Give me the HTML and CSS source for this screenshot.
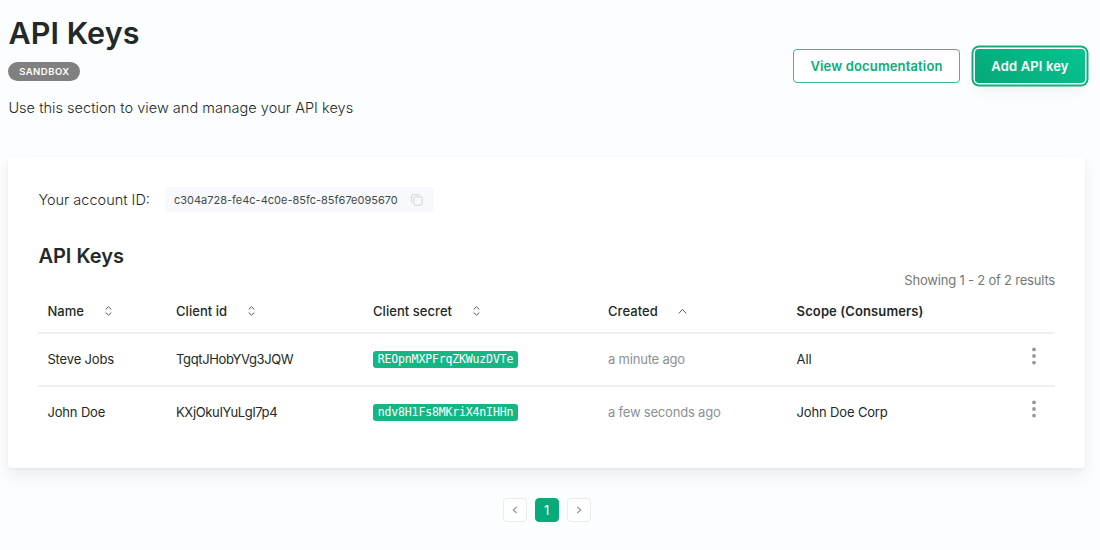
FILE: index.html
```html
<!DOCTYPE html>
<html lang="en">
<head>
    <meta charset="utf-8">
    <title>API Keys</title>

    <link rel="stylesheet" href="styles.css">
</head>
<body>

    <header class="header">
        <div class="header__info">
            <h1 class="header__title">API Keys</h1>
            <span class="header__badge">SANDBOX</span>
            <p class="header__text">Use this section to view and manage your API keys</p>
        </div>
        <div class="header__actions">
            <button class="button button--outline">View documentation</button>
            <button class="button button--primary">Add API key</button>
        </div>
    </header>

    <main class="card">
        <div class="account">
            <span class="account__label">Your account ID:</span>
            <div class="account__box">
                <span class="account__id">c304a728-fe4c-4c0e-85fc-85f67e095670</span>
                <svg class="account__copy" width="12" height="12" viewBox="0 0 12 12">
                    <rect x="2.9" y="2.9" width="8.3" height="8.3" rx="1.5"/>
                    <path d="M1.5 8.7Q.7 8.5.7 7.5V2.2Q.7.7 2.2.7h5.3q1 0 1.2.8"/>
                </svg>
            </div>
        </div>

        <h2 class="card__title">API Keys</h2>
        <p class="card__results">Showing 1 - 2 of 2 results</p>

        <table class="keys">
            <colgroup>
                <col class="keys__col-name">
                <col class="keys__col-id">
                <col class="keys__col-secret">
                <col class="keys__col-created">
                <col class="keys__col-scope">
                <col class="keys__col-menu">
            </colgroup>
            <thead>
                <tr>
                    <th>
                        <div class="keys__sort">Name
                            <svg class="icon-sort" width="7" height="10" viewBox="0 0 7 10"><path d="M.7 3.4 3.5.8l2.8 2.6M.7 6.6l2.8 2.6 2.8-2.6"/></svg>
                        </div>
                    </th>
                    <th>
                        <div class="keys__sort">Client id
                            <svg class="icon-sort" width="7" height="10" viewBox="0 0 7 10"><path d="M.7 3.4 3.5.8l2.8 2.6M.7 6.6l2.8 2.6 2.8-2.6"/></svg>
                        </div>
                    </th>
                    <th>
                        <div class="keys__sort">Client secret
                            <svg class="icon-sort" width="7" height="10" viewBox="0 0 7 10"><path d="M.7 3.4 3.5.8l2.8 2.6M.7 6.6l2.8 2.6 2.8-2.6"/></svg>
                        </div>
                    </th>
                    <th>
                        <div class="keys__sort keys__sort--active">Created
                            <svg class="icon-sort" width="9" height="10" viewBox="0 0 9 10"><path d="M.8 7.4l3.7-4 3.7 4"/></svg>
                        </div>
                    </th>
                    <th class="keys__scope">Scope (Consumers)</th>
                    <th></th>
                </tr>
            </thead>
            <tbody>
                <tr>
                    <td>Steve Jobs</td>
                    <td class="keys__id">TgqtJHobYVg3JQW</td>
                    <td class="keys__code"><code class="keys__secret">REOpnMXPFrqZKWuzDVTe</code></td>
                    <td class="keys__date">a minute ago</td>
                    <td>All</td>
                    <td class="keys__menu"><svg width="4" height="18" viewBox="0 0 4 18"><circle cx="2" cy="2.4" r="1.9"/><circle cx="2" cy="9" r="1.9"/><circle cx="2" cy="15.6" r="1.9"/></svg></td>
                </tr>
                <tr>
                    <td>John Doe</td>
                    <td class="keys__id">KXjOkuIYuLgl7p4</td>
                    <td class="keys__code"><code class="keys__secret">ndv8H1Fs8MKriX4nIHHn</code></td>
                    <td class="keys__date">a few seconds ago</td>
                    <td>John Doe Corp</td>
                    <td class="keys__menu"><svg width="4" height="18" viewBox="0 0 4 18"><circle cx="2" cy="2.4" r="1.9"/><circle cx="2" cy="9" r="1.9"/><circle cx="2" cy="15.6" r="1.9"/></svg></td>
                </tr>
            </tbody>
        </table>
    </main>

    <nav class="pagination">
        <a class="pagination__item"><svg width="6" height="8" viewBox="0 0 6 8"><path d="M4.7 1 1.3 4l3.4 3"/></svg></a>
        <a class="pagination__item pagination__item--active">1</a>
        <a class="pagination__item"><svg width="6" height="8" viewBox="0 0 6 8"><path d="M1.3 1l3.4 3-3.4 3"/></svg></a>
    </nav>

</body>
</html>
```
FILE: styles.css
```css
* {
    box-sizing: border-box;
}

body {
    background-color: #fcfdff;
    color: #222927;
    margin: 0;
    padding: 12px 15px 0 8.4px;
    font-family: Inter, "Open Sans", sans-serif;
    font-size: 13px;
    height: 550px;
    overflow: hidden;
}

h1, h2, p {
    margin: 0;
}

.header {
    display: flex;
    justify-content: space-between;
    height: 145px;
}

.header__title {
    font-size: 30.5px;
    font-weight: 600;
    line-height: 42px;
    letter-spacing: 0.1px;
}

.header__badge {
    display: block;
    width: 72px;
    height: 19px;
    margin-top: 8px;
    border-radius: 10px;
    background-color: #808080;
    color: #fff;
    font-size: 9.5px;
    font-weight: 600;
    line-height: 19px;
    letter-spacing: 0.5px;
    text-align: center;
}

.header__text {
    margin-top: 16px;
    font-size: 14.5px;
    font-weight: 300;
    line-height: 22px;
    letter-spacing: 0.03px;
    white-space: nowrap;
}

.header__actions {
    display: flex;
    gap: 15px;
    padding-top: 37px;
}

.button {
    height: 34px;
    border-radius: 4px;
    font-family: inherit;
    font-size: 13px;
    font-weight: 600;
    letter-spacing: 0.15px;
    padding: 0;
}

.button--outline {
    width: 167px;
    background-color: #fff;
    border: 1px solid #33bf92;
    color: #0bac79;
}

.button--primary {
    width: 110px;
    border: 0;
    background: linear-gradient(45deg, #06a878, #06c38f);
    color: #fff;
    box-shadow: 0 0 0 1.5px #fff, 0 0 0 3.5px #12ad7d, 0 8px 14px rgba(0,0,0,0.05);
}

.card {
    width: 1076.6px;
    height: 311px;
    padding: 30px 30px 0;
    border-radius: 4px;
    background-color: #fff;
    box-shadow: 0 8px 16px rgba(30,40,60,0.07), 0 1px 3px rgba(30,40,60,0.06);
}

.account {
    display: flex;
    align-items: center;
    gap: 15px;
    height: 25px;
}

.account__label {
    font-size: 14.5px;
    font-weight: 300;
}

.account__box {
    display: flex;
    align-items: center;
    justify-content: space-between;
    width: 269px;
    height: 25px;
    padding: 0 11px 0 9px;
    border-radius: 4px;
    background-color: #f8f9fc;
}

.account__id {
    color: #444a48;
    font-size: 11px;
}

.account__copy {
    fill: none;
    stroke: #d0d2d4;
}

.card__title {
    margin-top: 30px;
    font-size: 20px;
    font-weight: 600;
    line-height: 28px;
}

.card__results {
    margin-top: 1px;
    color: #737877;
    font-size: 13px;
    letter-spacing: -0.2px;
    line-height: 18px;
    text-align: right;
}

.keys {
    width: 1016.6px;
    table-layout: fixed;
    border-collapse: separate;
    border-spacing: 0;
}

.keys__col-name {
    width: 128.6px;
}

.keys__col-id {
    width: 197px;
}

.keys__col-secret {
    width: 235px;
}

.keys__col-created {
    width: 188.6px;
}

.keys__col-menu {
    width: 29px;
}

.keys th,
.keys td {
    padding: 0 0 0 9px;
    text-align: left;
    white-space: nowrap;
}

.keys th {
    height: 45px;
    border-bottom: 2px solid #efefef;
    font-weight: 500;
    letter-spacing: 0.05px;
}

.keys td {
    height: 51px;
    padding-bottom: 2px;
    letter-spacing: -0.15px;
}

.keys tbody tr:first-child td {
    height: 53px;
    border-bottom: 2px solid #efefef;
}

.keys .keys__code {
    padding-bottom: 0;
}

.keys .keys__id {
    letter-spacing: -0.35px;
}

.keys .keys__scope {
    font-weight: 600;
    letter-spacing: 0.12px;
}

.keys__sort {
    display: flex;
    align-items: center;
    gap: 21px;
}

.keys__sort--active {
    gap: 20px;
}

.icon-sort {
    fill: none;
    stroke: #555b59;
}

.keys__secret {
    display: block;
    width: 145px;
    height: 17px;
    border-radius: 3px;
    background-color: #14b784;
    color: #fff;
    font-family: "DejaVu Sans Mono", monospace;
    font-size: 11.5px;
    letter-spacing: -0.15px;
    line-height: 17px;
    text-align: center;
}

.keys .keys__date {
    color: #8b9194;
    letter-spacing: -0.2px;
}

.keys .keys__menu {
    padding: 0 0 8px 6.5px;
    line-height: 0;
}

.keys__menu svg {
    fill: #999;
}

.pagination {
    display: flex;
    justify-content: center;
    gap: 8px;
    margin-top: 30px;
}

.pagination__item {
    display: flex;
    align-items: center;
    justify-content: center;
    width: 24px;
    height: 24px;
    border: 1px solid #ebecee;
    border-radius: 4px;
    background-color: #fff;
}

.pagination__item svg {
    fill: none;
    stroke: #999;
    stroke-width: 1.2;
}

.pagination__item--active {
    border-color: #06ab7a;
    background-color: #06ab7a;
    color: #fff;
}
```
